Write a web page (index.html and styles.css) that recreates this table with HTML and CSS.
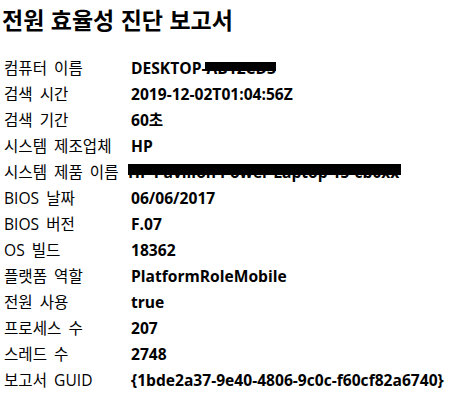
FILE: index.html
```html
<!DOCTYPE html>
<html lang="ko">
<head>
    <meta charset="UTF-8">
    <title>전원 효율성 진단 보고서</title>
    <link rel="stylesheet" href="styles.css">
</head>
<body>
    <h1>전원 효율성 진단 보고서</h1>

    <table class="info">
        <tr><td class="label">컴퓨터 이름</td><td class="value">DESKTOP-<span class="redact short">AB12CD3</span></td></tr>
        <tr><td class="label">검색 시간</td><td class="value">2019-12-02T01:04:56Z</td></tr>
        <tr><td class="label">검색 기간</td><td class="value">60초</td></tr>
        <tr><td class="label">시스템 제조업체</td><td class="value">HP</td></tr>
        <tr><td class="label">시스템 제품 이름</td><td class="value"><span class="redact long">HP Pavilion Power Laptop 15-cb0xx</span></td></tr>
        <tr><td class="label">BIOS 날짜</td><td class="value">06/06/2017</td></tr>
        <tr><td class="label">BIOS 버전</td><td class="value">F.07</td></tr>
        <tr><td class="label">OS 빌드</td><td class="value">18362</td></tr>
        <tr><td class="label">플랫폼 역할</td><td class="value">PlatformRoleMobile</td></tr>
        <tr><td class="label">전원 사용</td><td class="value">true</td></tr>
        <tr><td class="label">프로세스 수</td><td class="value">207</td></tr>
        <tr><td class="label">스레드 수</td><td class="value">2748</td></tr>
        <tr><td class="label">보고서 GUID</td><td class="value">{1bde2a37-9e40-4806-9c0c-f60cf82a6740}</td></tr>
    </table>
</body>
</html>
```

FILE: styles.css
```css
body {
    margin: 0;
    padding: 0 2px;
    font-family: "Open Sans", "Noto Sans CJK KR", sans-serif;
    color: #000;
    background: #fff;
}

h1 {
    font-size: 23px;
    font-weight: bold;
    margin: 0;
    padding: 2px 0 0;
    line-height: 34px;
    font-family: "Noto Sans CJK KR", sans-serif;
}

.info {
    border-collapse: collapse;
    margin-top: 19px;
    margin-left: 2px;
}

.info td {
    height: 26px;
    padding: 0;
    font-size: 15.6px;
    line-height: 20px;
    vertical-align: middle;
    white-space: nowrap;
}

.label {
    width: 127px;
    font-weight: normal;
    font-size: 16.4px;
    word-spacing: 3px;
}

.value {
    font-weight: bold;
}

/* 가려진 값 */
.redact {
    position: relative;
}

.redact::after {
    content: "";
    position: absolute;
    left: -1px;
    right: 0;
    top: 5px;
    height: 9px;
    background: #000;
}

.redact.long {
    margin-left: -3px;
}

.redact.long::after {
    left: 0;
    right: -2px;
    top: 3px;
    height: 11px;
}
```
